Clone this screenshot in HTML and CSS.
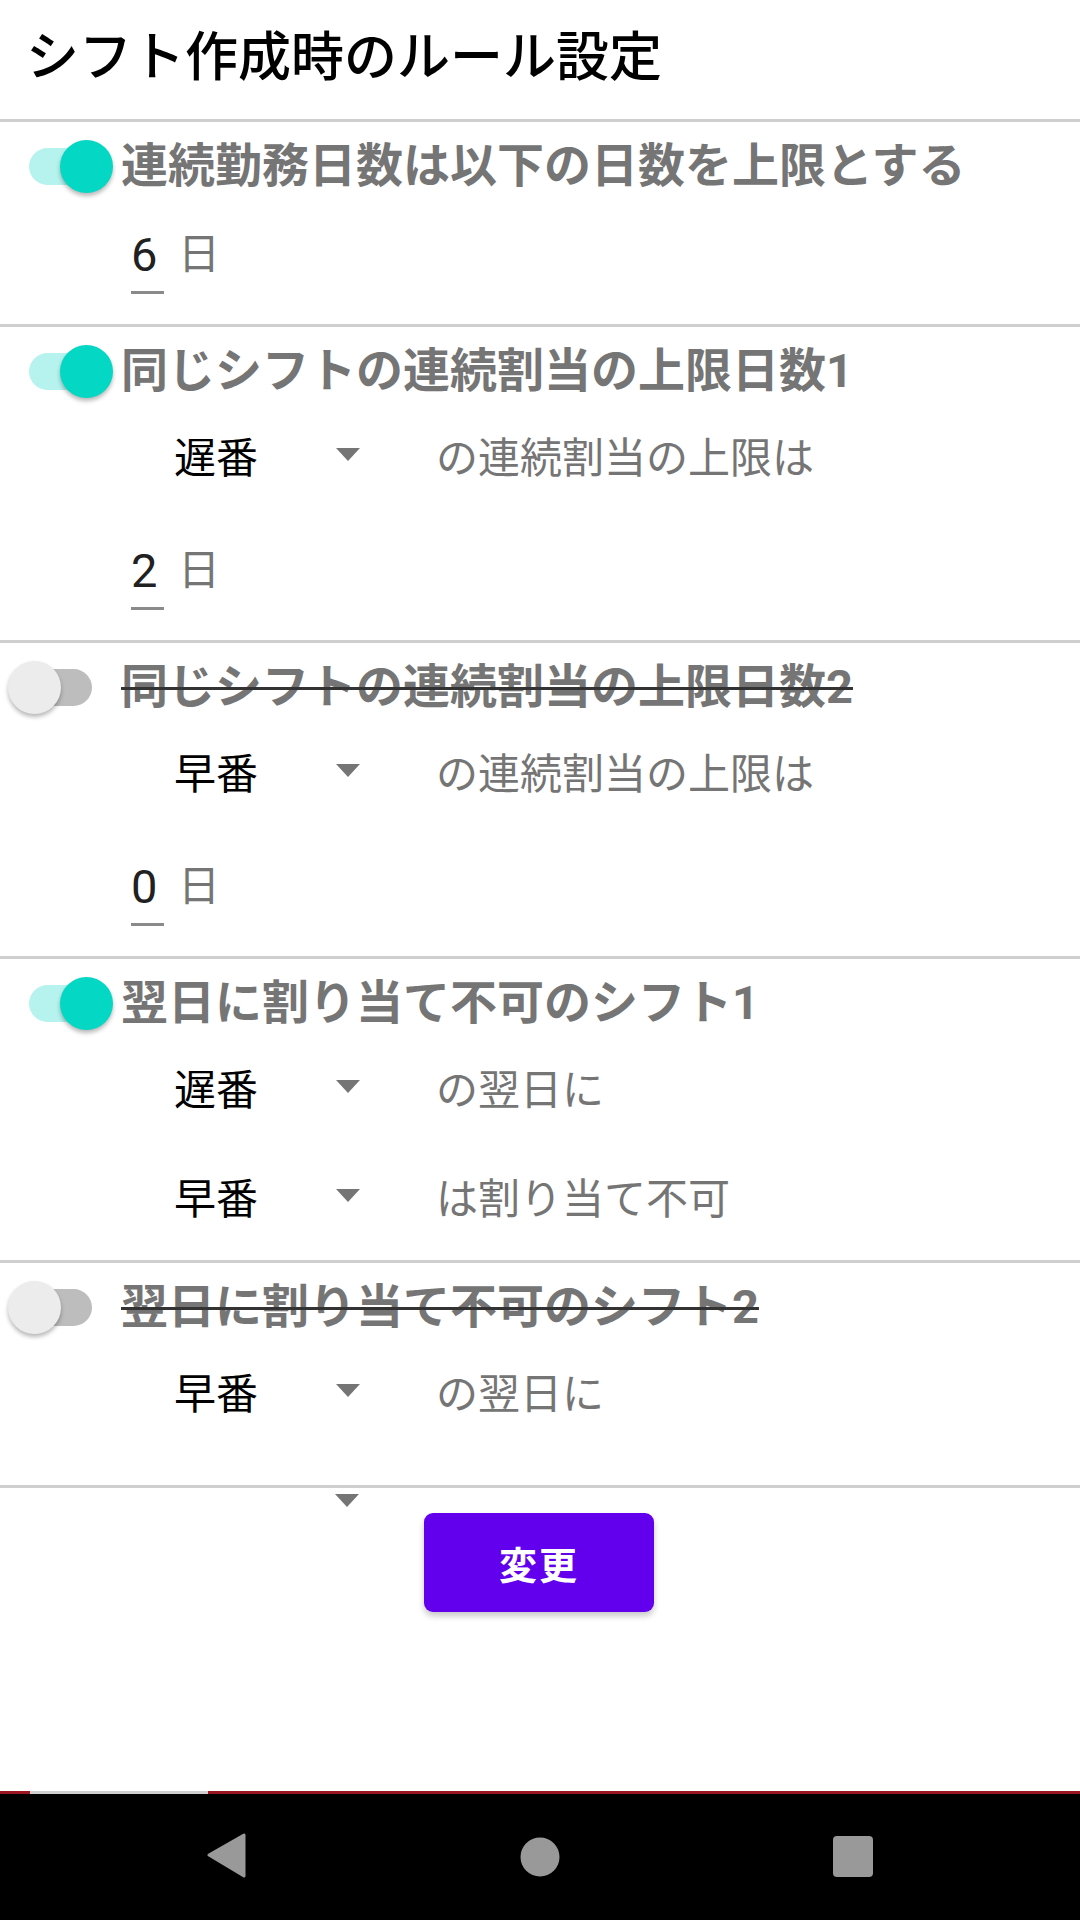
FILE: index.html
```html
<!DOCTYPE html>
<html lang="ja">
<head>
    <meta charset="UTF-8">
    <meta name="viewport" content="width=device-width, initial-scale=1.0">
    <title>シフト作成時のルール設定</title>
    <link rel="stylesheet" href="styles.css">
</head>
<body>
    <div class="screen">
        <div class="page-title">シフト作成時のルール設定</div>

        <!-- rule 1 -->
        <div class="rule">
            <div class="rule-head">
                <div class="switch on"><span class="track"></span><span class="thumb"></span></div>
                <span class="rule-name">連続勤務日数は以下の日数を上限とする</span>
            </div>
            <div class="num-row">
                <div class="edit"><span class="edit-value">6</span><span class="edit-line"></span></div>
                <span class="unit">日</span>
            </div>
        </div>

        <!-- rule 2 -->
        <div class="rule">
            <div class="rule-head">
                <div class="switch on"><span class="track"></span><span class="thumb"></span></div>
                <span class="rule-name">同じシフトの連続割当の上限日数1</span>
            </div>
            <div class="spin-row">
                <div class="spinner"><span class="spinner-text">遅番</span><span class="caret"></span></div>
                <span class="label">の連続割当の上限は</span>
            </div>
            <div class="num-row">
                <div class="edit"><span class="edit-value">2</span><span class="edit-line"></span></div>
                <span class="unit">日</span>
            </div>
        </div>

        <!-- rule 3 (disabled) -->
        <div class="rule">
            <div class="rule-head">
                <div class="switch"><span class="track"></span><span class="thumb"></span></div>
                <span class="rule-name off">同じシフトの連続割当の上限日数2</span>
            </div>
            <div class="spin-row">
                <div class="spinner"><span class="spinner-text">早番</span><span class="caret"></span></div>
                <span class="label">の連続割当の上限は</span>
            </div>
            <div class="num-row">
                <div class="edit"><span class="edit-value">0</span><span class="edit-line"></span></div>
                <span class="unit">日</span>
            </div>
        </div>

        <!-- rule 4 -->
        <div class="rule rule-pair">
            <div class="rule-head">
                <div class="switch on"><span class="track"></span><span class="thumb"></span></div>
                <span class="rule-name">翌日に割り当て不可のシフト1</span>
            </div>
            <div class="spin-row">
                <div class="spinner"><span class="spinner-text">遅番</span><span class="caret"></span></div>
                <span class="label">の翌日に</span>
            </div>
            <div class="spin-row">
                <div class="spinner"><span class="spinner-text">早番</span><span class="caret"></span></div>
                <span class="label">は割り当て不可</span>
            </div>
        </div>

        <!-- rule 5 (disabled, cut off by the scroll area) -->
        <div class="rule rule-cut">
            <div class="rule-head">
                <div class="switch"><span class="track"></span><span class="thumb"></span></div>
                <span class="rule-name off">翌日に割り当て不可のシフト2</span>
            </div>
            <div class="spin-row">
                <div class="spinner"><span class="spinner-text">早番</span><span class="caret"></span></div>
                <span class="label">の翌日に</span>
            </div>
        </div>

        <div class="footer">
            <span class="caret stray"></span>
            <button class="submit-btn">変更</button>
        </div>

        <div class="spacer"></div>

        <div class="sys-line"><span class="sys-line-mark"></span></div>
        <div class="navbar">
            <div class="nav-item">
                <svg width="48" height="48" viewBox="0 0 48 48">
                    <path d="M6 22 L41 2 L41 43 Z" fill="#999" stroke="#999" stroke-width="3" stroke-linejoin="round"/>
                </svg>
            </div>
            <div class="nav-item">
                <svg width="48" height="48" viewBox="0 0 48 48">
                    <circle cx="24" cy="24" r="19.5" fill="#999"/>
                </svg>
            </div>
            <div class="nav-item">
                <svg width="48" height="48" viewBox="0 0 48 48">
                    <rect x="4" y="3" width="40" height="41" rx="4" fill="#999"/>
                </svg>
            </div>
        </div>
    </div>
</body>
</html>
```
FILE: styles.css
```css
body {
    margin: 0;
    background-color: #ffffff;
    font-family: Roboto, "Noto Sans CJK JP", sans-serif;
}
.screen {
    width: 1080px;
    height: 1920px;
    display: flex;
    flex-direction: column;
    overflow: hidden;
}
.page-title {
    height: 122px;
    padding-left: 26px;
    padding-bottom: 14px;
    box-sizing: border-box;
    display: flex;
    align-items: center;
    font-size: 53px;
    font-weight: 500;
    color: #000000;
    border-bottom: 3px solid #cfcfcf;
}
.rule {
    border-bottom: 3px solid #cfcfcf;
}
.rule-pair {
    padding-bottom: 7px;
}
.rule-cut {
    padding-bottom: 35px;
}
.rule-head {
    margin-top: 12px;
    height: 64px;
    display: flex;
    align-items: center;
}
.rule-name {
    margin-left: 8px;
    font-size: 47px;
    font-weight: 700;
    line-height: 64px;
    color: #757575;
    white-space: nowrap;
}
.rule-name.off {
    text-decoration: line-through;
    text-decoration-color: #333333;
    text-decoration-thickness: 3px;
}

/* switch */
.switch {
    position: relative;
    width: 113px;
    height: 64px;
    flex-shrink: 0;
}
.track {
    position: absolute;
    left: 29px;
    top: 14px;
    width: 63px;
    height: 37px;
    border-radius: 19px;
    background-color: #bdbdbd;
}
.thumb {
    position: absolute;
    left: 8px;
    top: 6px;
    width: 53px;
    height: 53px;
    border-radius: 50%;
    background-color: #ececec;
    box-shadow: 0 3px 4px rgba(0, 0, 0, 0.28);
}
.switch.on .track {
    background-color: #b6f3ee;
}
.switch.on .thumb {
    left: 60px;
    background-color: #04d7c4;
}

/* spinner rows */
.spin-row {
    height: 103px;
    padding-bottom: 8px;
    display: flex;
    align-items: center;
    padding-left: 174px;
}
.spin-row + .spin-row {
    height: 99px;
}
.spinner {
    width: 186px;
    display: flex;
    align-items: center;
    justify-content: space-between;
}
.spinner-text {
    font-size: 42px;
    color: #000000;
}
.caret {
    width: 0;
    height: 0;
    border-left: 12.5px solid transparent;
    border-right: 12.5px solid transparent;
    border-top: 13px solid #757575;
}
.label {
    margin-left: 76px;
    font-size: 42px;
    color: #757575;
    white-space: nowrap;
}

/* number input rows */
.num-row {
    height: 126px;
    display: flex;
    align-items: flex-start;
    padding-left: 131px;
}
.edit {
    margin-top: 29px;
    width: 34px;
    display: flex;
    flex-direction: column;
}
.edit-value {
    font-size: 47px;
    line-height: 56px;
    color: #212121;
}
.edit-line {
    margin-top: 8px;
    width: 33px;
    height: 3px;
    background-color: #8a8a8a;
}
.unit {
    margin-top: 29px;
    margin-left: 13px;
    font-size: 42px;
    line-height: 56px;
    color: #757575;
}

/* footer */
.footer {
    display: flex;
    flex-direction: column;
}
.stray {
    margin-top: 6px;
    margin-left: 335px;
}
.submit-btn {
    margin-top: 6px;
    margin-left: 424px;
    width: 230px;
    height: 99px;
    border: none;
    border-radius: 9px;
    background-color: #6200ee;
    color: #ffffff;
    font-family: Roboto, "Noto Sans CJK JP", sans-serif;
    font-size: 38px;
    font-weight: 700;
    letter-spacing: 2px;
    box-shadow: 0 4px 6px rgba(0, 0, 0, 0.22);
    cursor: pointer;
}
.spacer {
    flex: 1;
}

/* system bars */
.sys-line {
    height: 3px;
    background-color: #9b1620;
}
.sys-line-mark {
    display: block;
    margin-left: 30px;
    width: 178px;
    height: 3px;
    background-color: #cfcfcf;
}
.navbar {
    height: 126px;
    background-color: #000000;
    display: flex;
    justify-content: center;
    align-items: center;
}
.nav-item {
    width: 313px;
    display: flex;
    justify-content: center;
}
```
